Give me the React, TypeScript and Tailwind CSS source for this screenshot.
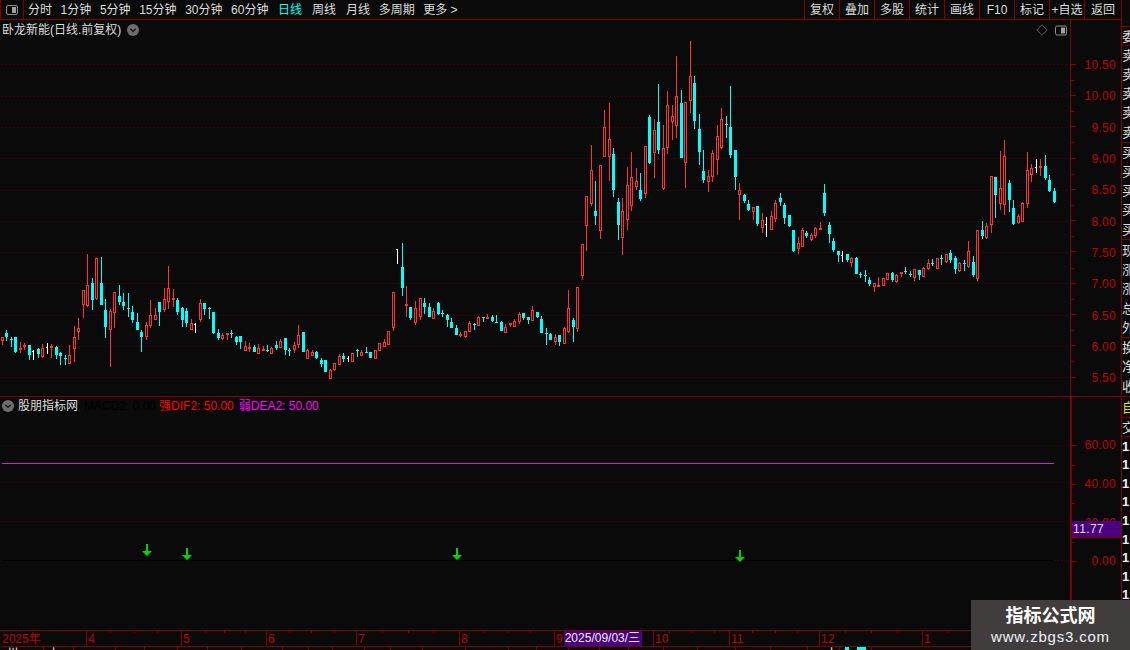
const FONT = "[font-family:'Liberation_Sans','Noto_Sans_CJK_SC',sans-serif]";

// candles read off the chart: kind x high top bottom low, in 3x crop coordinates
const SEGMENTS: { x0: number; y0: number; rows: string }[] = [
  {
    x0: 0,
    y0: 250,
    rows: `r 7 262 262 270 285,c 19 240 249 261 273,c 33 262 268 270 291,c 46 261 261 306 309,r 60 277 293 295 308,r 72 280 284 286 300,c 88 285 285 315 330,w 100 300 303 304 330,c 115 293 297 312 323,r 127 282 295 317 324,w 142 279 292 294 311,r 154 282 288 292 324,c 169 288 291 315 326,c 181 306 310 317 345,c 196 316 324 328 345,r 208 285 316 338 339,r 223 228 262 293 335,r 235 205 235 242 270,r 250 121 121 161 203,r 262 12 106 164 171,c 277 84 99 150 180,r 289 25 25 143 150,c 304 21 99 164 164,c 316 148 180 231 264,r 331 178 183 236 350,r 343 127 127 185 234,c 358 105 138 156 165,c 370 129 156 168 180,c 385 129 174 176 201,c 397 168 186 210 219,c 412 190 216 240 240,c 424 240 246 261 306,r 439 216 226 257 270,r 451 150 195 224 233,r 466 174 196 206 207,c 478 156 156 186 228,r 493 114 148 176 186,r 505 48 115 152 177,r 520 117 145 149 171,c 532 144 150 186 195,c 547 171 174 210 231,c 559 174 183 219 231,r 574 207 219 237 241,w 586 220 222 223 248,r 601 147 160 206 216,c 613 159 159 177 195,c 628 171 174 179 207,c 640 186 186 249 252,c 655 237 249 264 270,r 667 249 255 264 269,r 682 249 250 254 270,c 694 240 249 255 264,c 709 258 261 276 285,c 721 258 258 276 297,r 736 273 289 300 301,r 748 279 291 296 306,c 763 285 291 306 306,r 775 282 294 310 312,r 790 288 297 301 304,c 802 285 300 305 306,r 814 291 294 309 309,c 829 273 285 294 300,r 841 267 273 291 291,c 856 264 264 300 315,c 868 294 300 303 318,r 883 276 285 297 309,r 895 225 255 282 294`,
  },
  {
    x0: 300,
    y0: 220,
    rows: `c 10 336 336 396 396,r 22 388 391 413 414,r 37 390 396 404 407,c 49 393 396 414 417,c 64 414 420 432 441,c 76 420 420 456 456,r 91 447 450 473 473,r 103 429 430 447 453,r 118 402 408 431 432,c 130 399 408 417 426,w 145 408 413 415 426,r 157 399 400 422 423,c 172 387 390 396 411,r 184 390 396 404 408,c 199 381 396 399 399,c 211 396 396 414 414,r 226 390 391 413 414,r 238 369 370 390 390,r 253 357 366 378 378,r 265 333 334 372 372,r 280 216 217 320 333,w 292 87 88 89 132,c 307 69 141 204 228,r 319 198 252 257 291,c 331 261 261 294 300,r 346 243 264 306 315,r 361 234 235 288 300,c 373 234 249 261 282,c 388 249 261 291 291,r 400 264 273 294 294,c 415 246 249 282 285,c 427 270 279 282 291,c 442 282 285 300 321,c 454 294 306 324 324,c 469 315 324 345 345,r 481 336 342 348 351,r 496 333 333 348 354,r 508 303 309 333 333,c 523 309 311 315 330,r 535 288 291 315 318,c 550 291 292 295 306,r 562 282 291 297 297,c 577 285 291 303 306,c 589 285 306 309 309,c 604 303 306 333 333,r 616 312 321 336 336,r 631 309 309 315 321,r 643 297 303 318 318,r 658 276 282 303 312,c 670 279 279 294 300,c 685 291 291 300 312,r 697 258 270 300 300,c 712 276 276 291 294,c 724 288 297 339 339,c 739 324 339 342 375,c 751 339 342 360 360,r 766 342 351 363 375,c 778 345 345 366 378,r 793 321 324 369 369,r 805 210 264 333 339,c 820 294 300 321 366,r 832 201 201 324 336,r 847 72 72 165 180`,
  },
  {
    x0: 570,
    y0: 30,
    rows: `r 49 499 499 584 663,r 64 345 421 520 527,c 76 453 543 557 585,r 91 405 405 599 627,r 103 240 292 377 377,r 118 220 328 377 453,c 130 354 372 480 501,c 145 504 516 585 630,r 157 504 544 620 675,r 172 411 466 566 600,r 184 366 442 524 543,r 199 415 454 467 480,c 211 429 480 507 513,r 226 349 349 490 504,c 238 255 261 399 402,r 253 267 301 365 444,c 265 162 276 360 372,r 280 285 355 473 480,r 292 183 226 350 372,r 307 225 259 273 330,r 319 78 199 284 324,c 334 180 219 384 384,r 346 217 217 395 474,r 361 33 138 209 249,c 373 138 159 273 297,c 388 252 297 366 405,c 400 360 423 450 459,r 415 420 439 452 486,r 427 360 370 437 456,r 442 285 319 386 435,r 454 234 268 350 357,c 469 258 283 285 324,c 481 168 291 375 384,c 496 360 360 441 480,r 508 459 481 491 570,c 523 492 496 513 519,c 535 510 522 540 543,r 550 532 532 542 570,c 562 528 528 582 588,r 577 549 571 590 609,w 589 561 582 584 621,r 604 543 559 596 600,r 616 510 520 564 575,c 631 489 504 516 528,c 643 519 525 564 582,c 658 555 555 588 591,c 670 600 600 663 666,r 685 621 640 653 672,r 697 594 601 647 648,c 709 603 609 618 624,r 724 609 615 626 633,r 736 591 594 614 624,r 751 576 595 599 599,c 763 462 489 549 558,c 778 576 585 612 639,c 790 624 633 660 666,c 805 663 663 675 696`,
  },
  {
    x0: 800,
    y0: 130,
    rows: `w 127 363 375 377 396,c 142 372 372 390 396,r 154 381 385 396 411,c 169 381 384 432 432,c 181 426 432 435 444,c 196 420 435 441 456,c 208 441 450 462 468,r 223 459 460 468 486,r 235 441 465 471 471,r 250 444 445 465 465,r 262 429 430 447 447,c 277 426 429 450 456,r 289 432 435 453 459,r 304 426 427 429 441,c 316 411 423 426 432,c 331 423 432 438 441,r 343 417 418 441 453,c 358 420 420 435 450,r 370 411 414 438 441,r 385 387 400 414 420,c 397 387 400 402 408,r 412 385 385 414 414,c 424 375 384 390 405,r 439 372 373 393 399,c 451 360 369 390 399,c 466 378 384 417 432,r 478 396 399 420 426,c 493 390 399 405 423,r 505 333 364 408 414,c 520 378 396 435 441,r 532 300 301 444 453,c 547 273 300 318 327,r 559 279 288 321 327,r 574 139 139 281 309,c 586 141 141 195 264,r 601 63 175 219 240,r 613 30 79 221 255,c 628 150 159 210 246,c 640 210 234 282 285,r 655 252 258 276 282,r 667 216 219 273 273,r 682 66 121 219 234,r 694 102 114 132 156,w 709 87 111 113 129,r 721 87 108 110 138,c 736 75 108 144 150,c 748 135 150 183 186,c 763 174 183 216 219`,
  },
];

const CANDLES = SEGMENTS.flatMap(({ x0, y0, rows }) =>
  rows.split(',').map((row) => {
    const [kind, ...n] = row.trim().split(' ');
    const [x, hi, top, bot, lo] = n.map(Number);
    const py = (v: number) => Math.round(y0 + v / 3);
    return { kind, x: Math.floor(x0 + x / 3), hi: py(hi), top: py(top), bot: py(bot), lo: py(lo) };
  }),
);

const PRICE_GRID = [64, 96, 127, 158, 190, 221, 252, 283, 315, 346, 377];
const PRICES = ['10.50', '10.00', '9.50', '9.00', '8.50', '8.00', '7.50', '7.00', '6.50', '6.00', '5.50'];
const ARROWS = [
  [147, 544],
  [187, 548],
  [457, 548],
  [740, 550],
];
const TICKS = [110, 134, 157, 205, 224, 245, 289, 311, 334, 382, 408, 433, 483, 507, 530, 669, 691, 714, 752, 775, 797, 845, 871, 897, 947];
const FOOT_SEPS = [43, 73, 115, 144, 177, 207, 241, 282, 308, 332, 364, 390, 422, 465, 508, 536, 568, 599, 628, 663, 697, 735, 770, 807, 839, 871];

function Candle({ kind, x, hi, top, bot, lo }: (typeof CANDLES)[number]) {
  const wick = x + 0.5;
  if (kind === 'w') {
    return (
      <g fill="#ffffff">
        <rect x={x} y={hi} width={1} height={lo - hi} />
        <rect x={x - 1} y={top} width={1} height={1} />
      </g>
    );
  }
  if (kind === 'c') {
    return (
      <g fill="#00ffff">
        <rect x={x} y={hi} width={1} height={lo - hi} />
        {bot - top <= 2 ? (
          <rect x={x - 1} y={top} width={3} height={1} />
        ) : (
          <rect x={x - 1} y={top} width={3} height={bot - top} />
        )}
      </g>
    );
  }
  return (
    <g fill="none" stroke="#ff3232">
      <path d={`M${wick} ${hi}V${top}M${wick} ${bot}V${lo}`} />
      {bot - top <= 2 ? (
        <rect x={x - 0.5} y={top + 0.5} width={2} height={1} fill="#ff3232" />
      ) : (
        <rect x={x - 0.5} y={top + 0.5} width={2} height={bot - top} />
      )}
    </g>
  );
}

function SplitIcon({ className }: { className: string }) {
  return (
    <svg className={className} viewBox="0 0 12 10" fill="none">
      <rect x="0.5" y="0.5" width="11" height="9" rx="1.5" stroke="#8c8c8c" />
      <rect x="6" y="2" width="4" height="6" fill="#a0a0a0" />
    </svg>
  );
}

function Chevron({ className }: { className: string }) {
  return (
    <svg className={className} viewBox="0 0 12 12">
      <circle cx="6" cy="6" r="6" fill="#6e6e6e" />
      <path d="M3.2 4.8 6 7.6l2.8-2.8" fill="none" stroke="#1c1c1c" strokeWidth="1.4" />
    </svg>
  );
}

function AxisRow({ label, height, first, labelClass = '' }: { label: string; height: string; first?: boolean; labelClass?: string }) {
  return (
    <div className={`${height} relative flex items-center justify-between pr-[5px]`}>
      {!first && <span className="absolute left-0 top-0 w-[3px] h-px bg-[#800000]" />}
      <span className="w-[5px] h-px bg-[#800000]" />
      <span className={`${labelClass} text-[12px] tracking-[0.3px] text-[#c00000]`}>{label}</span>
    </div>
  );
}

function SideCell({ text, height, border, color = 'text-[#dcdcdc]' }: { text: string; height: string; border?: boolean; color?: string }) {
  return (
    <div className={`${height} ${border ? 'border-b border-[#800000]' : ''} ${color} overflow-hidden flex items-center text-[13px] leading-none whitespace-nowrap`}>
      {text}
    </div>
  );
}

function ToolbarButton({ label, wide }: { label: string; wide?: boolean }) {
  return (
    <div className={`${wide ? 'w-[37px]' : 'w-[35px]'} h-full border-l border-[#800000] flex items-center justify-center`}>{label}</div>
  );
}

export default function App() {
  return (
    <div className={`${FONT} relative flex w-[1130px] h-[650px] overflow-hidden bg-[#0a0a0a] text-[12px] text-[#dedede]`}>
      <div className="w-[1122px] shrink-0 flex flex-col border-r border-[#800000]">
        {/* toolbar */}
        <div className="h-[20px] shrink-0 flex items-center border-b border-[#800000]">
          <div className="w-[24px] h-full flex items-center justify-center border-x border-[#800000]">
            <SplitIcon className="w-[12px] h-[10px]" />
          </div>
          <div className="ml-[4px] flex items-center gap-[8.6px]">
            <span>分时</span>
            <span>1分钟</span>
            <span>5分钟</span>
            <span>15分钟</span>
            <span>30分钟</span>
            <span>60分钟</span>
            <span className="ml-[1px] text-[#00ffff]">日线</span>
            <span className="ml-[1.4px]">周线</span>
            <span className="ml-[1.4px]">月线</span>
            <span>多周期</span>
            <span>更多 &gt;</span>
          </div>
          <div className="ml-auto h-full flex">
            <ToolbarButton label="复权" />
            <ToolbarButton label="叠加" />
            <ToolbarButton label="多股" />
            <ToolbarButton label="统计" />
            <ToolbarButton label="画线" />
            <ToolbarButton label="F10" />
            <ToolbarButton label="标记" />
            <ToolbarButton label="+自选" />
            <ToolbarButton label="返回" wide />
          </div>
        </div>

        {/* price panel */}
        <div className="relative h-[377px] shrink-0 flex border-b border-[#800000]">
          <svg className="block w-[1070px] h-[376px]" viewBox="0 20 1070 376" shapeRendering="crispEdges">
            {PRICE_GRID.map((y) => (
              <line key={y} x1="2" x2="1067" y1={y + 0.5} y2={y + 0.5} stroke="#5c0000" strokeDasharray="1 3" />
            ))}
            {CANDLES.map((c, i) => (
              <Candle key={i} {...c} />
            ))}
          </svg>
          <div className="w-[51px] border-l border-[#800000] pt-[28.5px]">
            {PRICES.map((p, i) => (
              <AxisRow key={p} label={p} height="h-[31.3px]" first={i === 0} labelClass="translate-y-[1px]" />
            ))}
          </div>
          <div className="absolute left-[2px] top-[1px] flex items-center gap-[6px] h-[17px]">
            <span>卧龙新能(日线.前复权)</span>
            <Chevron className="w-[12px] h-[12px]" />
          </div>
          <div className="absolute left-[1036px] top-[4px] flex items-center gap-[7px]">
            <svg className="w-[12px] h-[12px]" viewBox="0 0 12 12" fill="none">
              <path d="M6 .8 11.2 6 6 11.2.8 6z" stroke="#5a5a5a" />
            </svg>
            <SplitIcon className="w-[12px] h-[11px]" />
          </div>
        </div>

        {/* indicator panel */}
        <div className="relative h-[234px] shrink-0 flex border-b border-[#800000]">
          <svg className="block w-[1070px] h-[233px]" viewBox="0 397 1070 233" shapeRendering="crispEdges">
            {[445, 482, 521].map((y) => (
              <line key={y} x1="2" x2="1067" y1={y + 0.5} y2={y + 0.5} stroke="#5c0000" strokeDasharray="1 3" />
            ))}
            <line x1="1054" x2="1067" y1="560.5" y2="560.5" stroke="#5c0000" strokeDasharray="1 3" />
            <line x1="2" x2="1054" y1="463.5" y2="463.5" stroke="#e014e0" />
            <line x1="2" x2="1054" y1="560.5" y2="560.5" stroke="#000000" />
            {ARROWS.map(([x, y]) => (
              <path key={x} d={`M${x - 1} ${y}h2v7h4l-5 5-5-5h4z`} fill="#00d400" shapeRendering="auto" />
            ))}
          </svg>
          <div className="w-[51px] border-l-2 border-[#800000] pt-[29px]">
            {['60.00', '40.00', '20.00', '0.00'].map((p, i) => (
              <AxisRow key={p} label={p} height="h-[38.7px]" first={i === 0} />
            ))}
          </div>
          <div className="absolute left-[2px] top-0 h-[17px] flex items-center">
            <Chevron className="w-[12px] h-[12px]" />
            <span className="ml-[4px]">股朋指标网</span>
            <span className="ml-[6px] text-[#000000]">MACD2: 0.00</span>
            <span className="ml-[3px] text-[#ff0000]">强DIF2: 50.00</span>
            <span className="ml-[5px] text-[#ff00ff]">弱DEA2: 50.00</span>
          </div>
          <div className="absolute left-[1072px] top-[124px] w-[49px] h-[17px] flex items-center bg-[#4b0082] border-b border-[#800000] pl-[1px] tracking-[0.4px]">
            11.77
          </div>
        </div>

        {/* time axis */}
        <div className="relative h-[16px] shrink-0 flex border-b border-[#800000] text-[#c00000] leading-[17px]">
          <div className="w-[86px] pl-[2px]">2025年</div>
          <div className="w-[95px] border-l border-[#800000] pl-[1px]">4</div>
          <div className="w-[85px] border-l border-[#800000] pl-[1px]">5</div>
          <div className="w-[90px] border-l border-[#800000] pl-[1px]">6</div>
          <div className="w-[103px] border-l border-[#800000] pl-[1px]">7</div>
          <div className="w-[95px] border-l border-[#800000] pl-[1px]">8</div>
          <div className="w-[99px] border-l border-[#800000] pl-[1px] flex">
            <span>9</span>
            <span className="ml-[1px] w-[78px] h-[15px] leading-[15px] bg-[#4b0082] text-[#f0f0f0] pl-[1px] whitespace-nowrap">2025/09/03/三</span>
          </div>
          <div className="w-[76px] border-l border-[#800000] pl-[1px]">10</div>
          <div className="w-[90px] border-l border-[#800000] pl-[1px]">11</div>
          <div className="w-[103px] border-l border-[#800000] pl-[1px]">12</div>
          <div className="flex-1 border-l border-[#800000] pl-[1px]">1</div>
          <svg className="absolute left-0 top-0 w-[1000px] h-[2px]" viewBox="0 0 1000 2" shapeRendering="crispEdges">
            {TICKS.map((x) => (
              <rect key={x} x={x} y="0" width="1" height="2" fill="#800000" />
            ))}
          </svg>
        </div>

        {/* bottom strip, cut off by the window */}
        <div className="relative h-[3px] overflow-hidden leading-[14px] text-[#f0f0f0]">
          <span className="absolute left-[7px] top-0">卅</span>
          <span className="absolute left-[48px] top-0">上</span>
          <span className="absolute left-[826px] top-0">上</span>
          <span className="absolute left-[845px] top-0 w-[4px] h-[3px] bg-[#00ffff]" />
          <span className="absolute left-[857px] top-0 w-[9px] h-[3px] bg-[#00ffff]" />
          {FOOT_SEPS.map((x) => (
            <span key={x} className="absolute top-0 w-px h-[3px] bg-[#800000]" style={{ left: x }} />
          ))}
        </div>
      </div>

      {/* quote column, cut off at the window edge */}
      <div className="flex-1 min-w-0 flex flex-col pt-[20px] overflow-hidden">
        <SideCell text="" height="h-[7px]" border />
        <SideCell text="委" height="h-[19px]" border />
        <SideCell text="卖" height="h-[19px]" />
        <SideCell text="卖" height="h-[19px]" />
        <SideCell text="卖" height="h-[19px]" />
        <SideCell text="卖" height="h-[19px]" />
        <SideCell text="卖" height="h-[21px]" border />
        <SideCell text="买" height="h-[19px]" />
        <SideCell text="买" height="h-[19px]" />
        <SideCell text="买" height="h-[19px]" />
        <SideCell text="买" height="h-[19px]" />
        <SideCell text="买" height="h-[21px]" border />
        <SideCell text="现" height="h-[20px]" />
        <SideCell text="涨" height="h-[19px]" />
        <SideCell text="涨" height="h-[19px]" />
        <SideCell text="总" height="h-[20px]" />
        <SideCell text="外" height="h-[20px]" border />
        <SideCell text="换" height="h-[19px]" />
        <SideCell text="净" height="h-[19px]" />
        <SideCell text="收" height="h-[21px]" border />
        <SideCell text="自" height="h-[21px]" border color="text-[#e0e000]" />
        <SideCell text="交" height="h-[19px]" border />
        {[0, 1, 2, 3, 4, 5, 6, 7, 8].map((i) => (
          <div key={i} className="h-[18.6px] flex items-center font-bold text-[13px] text-[#f0f0f0]">
            1
          </div>
        ))}
      </div>

      {/* watermark */}
      <div className="absolute right-0 bottom-0 w-[159px] h-[50px] flex flex-col items-center justify-center bg-[#423d3d]">
        <span className="text-[18px] leading-[24px] font-bold text-white">指标公式网</span>
        <span className="text-[15px] leading-[18px] tracking-[0.8px] text-[#eaf2ff]">www.zbgs3.com</span>
      </div>
    </div>
  );
}
